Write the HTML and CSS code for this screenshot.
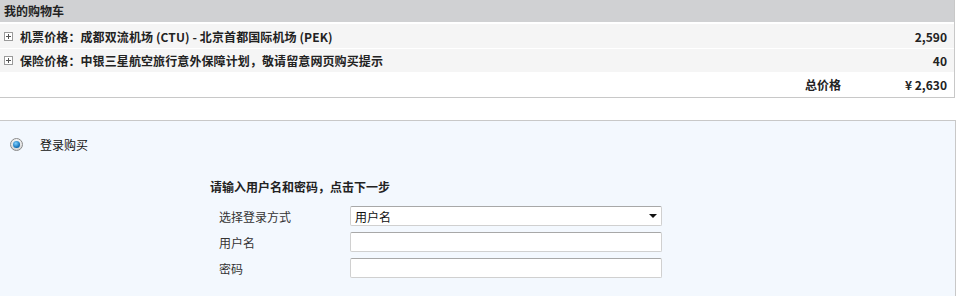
FILE: index.html
```html
<!DOCTYPE html>
<html lang="zh-CN">
  <head>
    <meta charset="UTF-8" />
    <meta name="viewport" content="width=device-width, initial-scale=1.0" />
    <title>我的购物车</title>
    <link rel="stylesheet" href="styles.css">
  </head>
  <body>
    <div class="cart">
      <div class="cartTitle">我的购物车</div>
      <div class="cartRow">
        <span class="expand"></span>
        <p class="rowName">机票价格：成都双流机场 (CTU) - 北京首都国际机场 (PEK)</p>
        <p class="rowPrice">2,590</p>
      </div>
      <div class="cartRow rowSecond">
        <span class="expand"></span>
        <p class="rowName">保险价格：中银三星航空旅行意外保障计划，敬请留意网页购买提示</p>
        <p class="rowPrice">40</p>
      </div>
      <div class="cartTotal">
        <p class="totalLabel">总价格</p>
        <p class="rowPrice">¥ 2,630</p>
      </div>
    </div>

    <div class="loginPanel">
      <label class="loginChoice">
        <span class="radio"><span class="radioDot"></span></span>
        <span>登录购买</span>
      </label>

      <form class="loginForm">
        <h3>请输入用户名和密码，点击下一步</h3>
        <div class="formRow">
          <label for="loginType">选择登录方式</label>
          <div class="selectWrap">
            <select id="loginType">
              <option>用户名</option>
              <option>卡号</option>
            </select>
            <span class="selectArrow"></span>
          </div>
        </div>
        <div class="formRow">
          <label for="userName">用户名</label>
          <input type="text" id="userName" />
        </div>
        <div class="formRow">
          <label for="password">密码</label>
          <input type="password" id="password" />
        </div>
      </form>
    </div>
  </body>
</html>
```

FILE: styles.css
```css
body {
  margin: 0;
  font-family: "Noto Sans CJK SC", "Noto Sans", sans-serif;
  font-size: 12px;
  color: #333;
}
p {
  margin: 0;
}

.cart {
  width: 954px;
  border-right: 1px solid #c8c8c8;
  border-bottom: 1px solid #c8c8c8;
}
.cartTitle {
  height: 22px;
  line-height: 22px;
  padding-left: 4px;
  background-color: #d0d1d3;
  font-weight: bold;
  color: #222;
}
.cartRow {
  display: flex;
  align-items: center;
  height: 24px;
  margin-top: 2px;
  padding: 0 7px 0 4px;
  background-color: #f5f5f5;
  font-weight: bold;
  color: #222;
}
.rowSecond {
  margin-top: 1px;
  height: 23px;
}
.rowName {
  flex: 1;
  margin-left: 7px;
  letter-spacing: 0.1px;
}
.expand {
  position: relative;
  width: 7px;
  height: 7px;
  border: 1px solid #9a9a9a;
  background: #fff;
}
.expand::before,
.expand::after {
  content: "";
  position: absolute;
  background: #555;
}
.expand::before {
  left: 1px;
  top: 3px;
  width: 5px;
  height: 1px;
}
.expand::after {
  left: 3px;
  top: 1px;
  width: 1px;
  height: 5px;
}
.cartTotal {
  display: flex;
  align-items: center;
  justify-content: flex-end;
  height: 25px;
  padding-right: 7px;
  font-weight: bold;
  color: #222;
}
.totalLabel {
  margin-right: 64px;
}

.loginPanel {
  margin-top: 22px;
  width: 955px;
  height: 175px;
  background-color: #f3f8fe;
  border-top: 1px solid #c8c8c8;
  border-right: 1px solid #c8c8c8;
}
.loginChoice {
  display: flex;
  align-items: center;
  gap: 17px;
  padding: 15px 0 0 10px;
  color: #111;
}
.radio {
  display: flex;
  align-items: center;
  justify-content: center;
  width: 11px;
  height: 11px;
  border: 1px solid #8a8a8a;
  border-radius: 50%;
  background: linear-gradient(#f4f4f4, #d6d6d6);
}
.radioDot {
  width: 7px;
  height: 7px;
  border-radius: 50%;
  background: radial-gradient(circle at 40% 35%, #7fd0ff, #0d6bb3 70%, #084c85);
}

.loginForm {
  margin: 25px 0 0 210px;
}
.loginForm h3 {
  margin: 0 0 11px;
  font-size: 12px;
  font-weight: bold;
  color: #222;
}
.formRow {
  display: flex;
  align-items: center;
  margin-bottom: 6px;
  padding-left: 9px;
}
.formRow label {
  width: 131px;
}
.formRow input,
.formRow select {
  box-sizing: border-box;
  width: 312px;
  height: 20px;
  margin: 0;
  padding: 0 4px;
  border: 1px solid #d0d0d0;
  border-top-color: #a8a8a8;
  border-radius: 2px;
  background: #fff;
  font-family: inherit;
  font-size: 12px;
  color: #111;
}
.selectWrap {
  position: relative;
}
.formRow select {
  appearance: none;
  -webkit-appearance: none;
}
.selectArrow {
  position: absolute;
  right: 5px;
  top: 8px;
  border-left: 4px solid transparent;
  border-right: 4px solid transparent;
  border-top: 4px solid #111;
}
```
